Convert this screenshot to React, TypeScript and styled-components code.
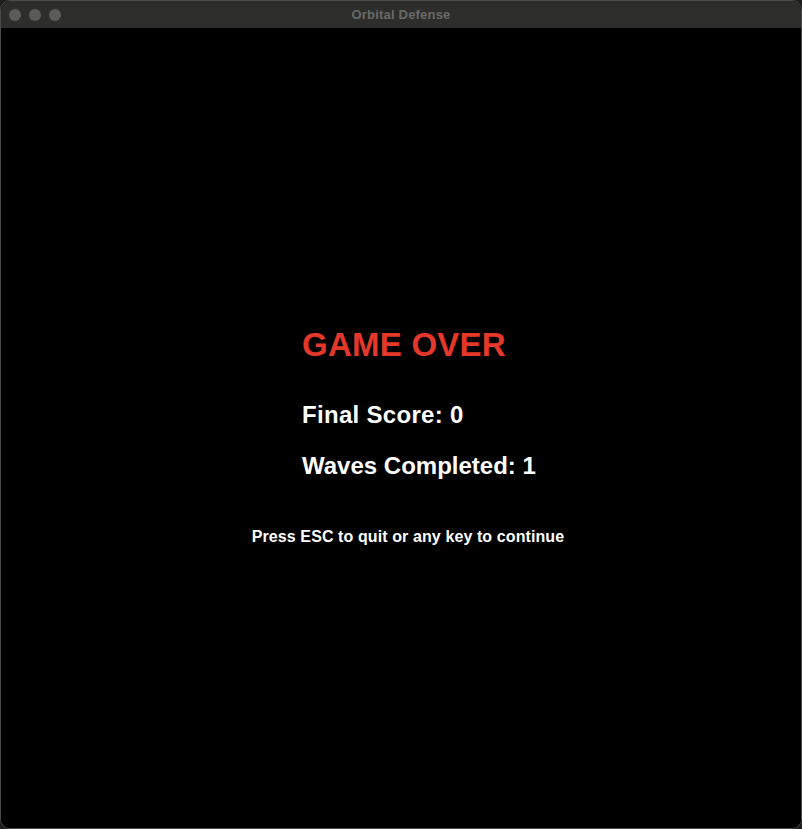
import React from "react";
import styled, { createGlobalStyle } from "styled-components";

const Global = createGlobalStyle`
  html, body { margin: 0; padding: 0; background: #1e1e1e; }
  #root { width: 802px; height: 829px; }
`;

const Window = styled.div`
  box-sizing: border-box;
  width: 802px;
  height: 829px;
  display: flex;
  flex-direction: column;
  border: 1px solid #4a4a4a;
  border-radius: 10px;
  overflow: hidden;
  background: #000;
`;

const TitleBar = styled.div`
  position: relative;
  height: 27px;
  flex: none;
  display: flex;
  align-items: center;
  justify-content: center;
  background: #2d2d2b;
`;

const Lights = styled.div`
  position: absolute;
  left: 8px;
  top: 8px;
  display: flex;
  gap: 8px;
`;

const Light = styled.span`
  width: 12px;
  height: 12px;
  border-radius: 50%;
  background: #5b5b5a;
`;

const Title = styled.div`
  font-family: "Liberation Sans", Arial, sans-serif;
  font-weight: bold;
  font-size: 13px;
  color: #6a6a68;
  letter-spacing: 0.2px;
`;

const Content = styled.div`
  flex: 1;
  background: #000;
  display: flex;
  flex-direction: column;
  padding-top: 300px;
  font-family: "Liberation Sans", Arial, sans-serif;
  font-weight: bold;
`;

const Line = styled.div<{ $size: number; $gap: number; $spacing: number; $color?: string }>`
  padding-left: 301px;
  font-size: ${(p) => p.$size}px;
  line-height: ${(p) => p.$size}px;
  letter-spacing: ${(p) => p.$spacing}px;
  margin-top: ${(p) => p.$gap}px;
  color: ${(p) => p.$color ?? "#ffffff"};
  white-space: nowrap;
`;

const Hint = styled.div`
  margin-top: 51px;
  padding-left: 14px;
  text-align: center;
  font-size: 16px;
  line-height: 16px;
  letter-spacing: 0.1px;
  color: #ffffff;
  white-space: nowrap;
`;

export default function App() {
  return (
    <>
      <Global />
      <Window>
        <TitleBar>
          <Lights>
            <Light />
            <Light />
            <Light />
          </Lights>
          <Title>Orbital Defense</Title>
        </TitleBar>
        <Content>
          <Line $size={33} $gap={0} $spacing={0.25} $color="#e5382a">GAME OVER</Line>
          <Line $size={24} $gap={42} $spacing={0.3}>Final Score: 0</Line>
          <Line $size={24} $gap={27} $spacing={0}>Waves Completed: 1</Line>
          <Hint>Press ESC to quit or any key to continue</Hint>
        </Content>
      </Window>
    </>
  );
}
